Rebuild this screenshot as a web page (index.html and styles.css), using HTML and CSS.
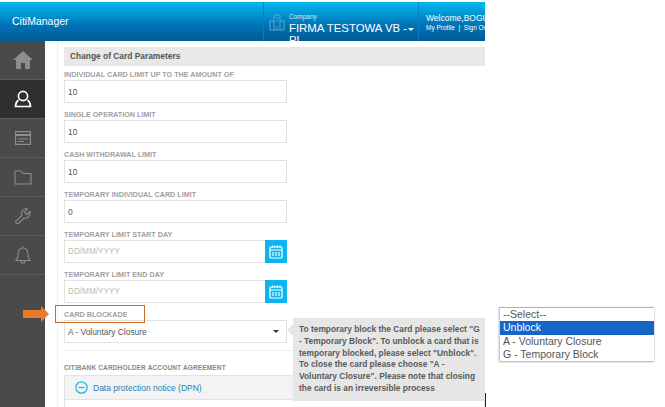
FILE: index.html
```html
<!DOCTYPE html>
<html lang="en">
<head>
    <meta charset="UTF-8">
    <title>CitiManager</title>
    <link rel="stylesheet" href="styles.css">
</head>
<body>
    <div class="app">
        <header class="topbar">
            <div class="brand">CitiManager</div>
            <div class="company">
                <svg class="company-icon" width="16" height="18" viewBox="0 0 16 18" fill="none" stroke="#5fa6cf" stroke-width="1">
                    <path d="M5 17V2h6v15M5 8H1v9h14V8h-4M8 17v-4M7 5h2M7 8h2"/>
                </svg>
                <div class="company-text">
                    <div class="company-label">Company</div>
                    <div class="company-name">FIRMA TESTOWA VB - PL</div>
                </div>
                <span class="caret-white"></span>
            </div>
            <div class="welcome">
                <div class="welcome-name">Welcome,BOGUSLAW</div>
                <div class="welcome-links">My Profile &nbsp;|&nbsp; Sign Out</div>
            </div>
        </header>
        <div class="content">
            <nav class="sidebar">
                <div class="nav-item">
                    <svg width="20" height="18" viewBox="0 0 20 18"><path fill="#8d8d8d" d="M10 0 0 9h3v9h5v-6h4v6h5V9h3z"/></svg>
                </div>
                <div class="nav-item active">
                    <svg width="18" height="18" viewBox="0 0 18 18" fill="none" stroke="#fff" stroke-width="1.6"><circle cx="9" cy="6" r="4.6"/><path d="M4.5 10C2.5 11.5 1.5 13.5 1.5 16.5h15C16.5 13.5 15.5 11.5 13.5 10"/></svg>
                </div>
                <div class="nav-item">
                    <svg width="16" height="14" viewBox="0 0 16 14" fill="none" stroke="#8d8d8d" stroke-width="1.2"><rect x="0.6" y="0.6" width="14.8" height="12.8"/><path d="M1 4h14" stroke-width="2"/><path d="M3 8h10M3 10.5h6"/></svg>
                </div>
                <div class="nav-item">
                    <svg width="18" height="15" viewBox="0 0 18 15" fill="none" stroke="#8d8d8d" stroke-width="1.1"><path d="M1 14V1h6l2 2.5h8V14z"/></svg>
                </div>
                <div class="nav-item">
                    <svg width="16" height="17" viewBox="0 0 16 17" fill="none" stroke="#8d8d8d" stroke-width="1.1"><path d="M15 3.5 12 6.5 9.5 4.5 12.5 1C9.5.2 6.5 2 6.5 5.5c0 1 .2 1.5.4 2L1 13c-1 1.5 1 3.5 2.5 2.5L9 10c3.5 1 6.5-2 6-6.5z"/></svg>
                </div>
                <div class="nav-item">
                    <svg width="16" height="18" viewBox="0 0 16 18" fill="none" stroke="#8d8d8d" stroke-width="1.1"><path d="M1 14.5c1.5-1.5 2-3 2-6C3 4 5 2 8 2s5 2 5 6.5c0 3 .5 4.5 2 6zM8 .5V2M6 15c0 3 4 3 4 0"/></svg>
                </div>
            </nav>
            <main class="main">
                <h2 class="section-title">Change of Card Parameters</h2>
                <div class="field">
                    <label class="field-label">INDIVIDUAL CARD LIMIT UP TO THE AMOUNT OF</label>
                    <div class="input">10</div>
                </div>
                <div class="field">
                    <label class="field-label">SINGLE OPERATION LIMIT</label>
                    <div class="input">10</div>
                </div>
                <div class="field">
                    <label class="field-label">CASH WITHDRAWAL LIMIT</label>
                    <div class="input">10</div>
                </div>
                <div class="field">
                    <label class="field-label">TEMPORARY INDIVIDUAL CARD LIMIT</label>
                    <div class="input">0</div>
                </div>
                <div class="field">
                    <label class="field-label">TEMPORARY LIMIT START DAY</label>
                    <div class="input date">
                        <span class="placeholder">DD/MM/YYYY</span>
                        <span class="date-btn">
                            <svg width="14" height="14" viewBox="0 0 14 14" fill="none" stroke="#fff" stroke-width="1.2"><rect x="1" y="2" width="12" height="11" rx="1"/><path d="M1 5h12M3.5 0.5v2M6 0.5v2M8.5 0.5v2M11 0.5v2M4 7v4M7 7v4M10 7v4"/></svg>
                        </span>
                    </div>
                </div>
                <div class="field">
                    <label class="field-label">TEMPORARY LIMIT END DAY</label>
                    <div class="input date">
                        <span class="placeholder">DD/MM/YYYY</span>
                        <span class="date-btn">
                            <svg width="14" height="14" viewBox="0 0 14 14" fill="none" stroke="#fff" stroke-width="1.2"><rect x="1" y="2" width="12" height="11" rx="1"/><path d="M1 5h12M3.5 0.5v2M6 0.5v2M8.5 0.5v2M11 0.5v2M4 7v4M7 7v4M10 7v4"/></svg>
                        </span>
                    </div>
                </div>
                <div class="field">
                    <label class="field-label">CARD BLOCKADE</label>
                    <div class="input select">A - Voluntary Closure<span class="caret-dark"></span></div>
                </div>
                <hr class="divider">
                <div class="agreement-label">CITIBANK CARDHOLDER ACCOUNT AGREEMENT</div>
                <div class="accordion">
                    <div class="accordion-head">
                        <svg width="13" height="13" viewBox="0 0 13 13" fill="none" stroke="#1ab4ea" stroke-width="1.2"><circle cx="6.5" cy="6.5" r="5.7"/><path d="M3.5 6.5h6"/></svg>
                        <span>Data protection notice (DPN)</span>
                    </div>
                </div>
            </main>
        </div>

        <div class="tooltip">To temporary block the Card please select "G - Temporary Block". To unblock a card that is temporary blocked, please select "Unblock". To close the card please choose "A - Voluntary Closure". Please note that closing the card is an irreversible process</div>
    </div>

    <!-- annotations pasted over the screenshot -->
    <div class="highlight"></div>
    <svg class="arrow" width="26" height="16" viewBox="0 0 26 16"><path fill="#e87b2c" d="M0 4h18V0l8 8-8 8v-4H0z"/></svg>
    <span class="edge-line"></span>
    <ul class="dropdown">
        <li>--Select--</li>
        <li class="selected">Unblock</li>
        <li>A - Voluntary Closure</li>
        <li>G - Temporary Block</li>
    </ul>
</body>
</html>
```

FILE: styles.css
```css
body {
    margin: 0;
    font-family: "Liberation Sans", Arial, sans-serif;
    background: white;
    color: #555;
    height: 407px;
    overflow: hidden;
}
.app {
    position: relative;
    width: 485px;
    height: 405px;
    margin-top: 2px;
    overflow: hidden;
}
.topbar {
    display: flex;
    height: 39px;
    background: linear-gradient(to bottom, #00b8f1, #0073b6 60%, #005a98);
    color: white;
}
.brand {
    width: 263px;
    padding-left: 12px;
    line-height: 39px;
    font-size: 10.5px;
    box-sizing: border-box;
    flex-shrink: 0;
}
.company {
    display: flex;
    width: 156px;
    padding-left: 5px;
    border-left: 1px solid #0a7fbe;
    border-right: 1px solid #0a7fbe;
    box-sizing: border-box;
    flex-shrink: 0;
    overflow: hidden;
}
.company-icon {
    margin: 11px 4px 0 0;
    flex-shrink: 0;
}
.company-text {
    width: 120px;
    flex-shrink: 0;
}
.company-label {
    font-size: 6.5px;
    margin-top: 11px;
    color: #cdeaf8;
}
.company-name {
    font-size: 11.4px;
    line-height: 12px;
    margin-top: 2px;
}
.caret-white {
    width: 0;
    height: 0;
    border: 3.5px solid transparent;
    border-top: 3.5px solid white;
    margin: 26px 0 0 -1px;
}
.welcome {
    padding: 11px 0 0 7px;
    white-space: nowrap;
}
.welcome-name {
    font-size: 8.5px;
}
.welcome-links {
    font-size: 6.5px;
    margin-top: 1px;
}
.content {
    display: flex;
    height: 366px;
}
.sidebar {
    width: 45px;
    background: #4a4a4a;
    flex-shrink: 0;
}
.nav-item {
    display: flex;
    align-items: center;
    justify-content: center;
    height: 38px;
    border-bottom: 1px solid #5c5c5c;
}
.nav-item.active {
    background: #2f2f2f;
}
.main {
    flex: 1;
    margin-left: 12px;
    padding: 6px 0 0 6px;
    border-left: 1px solid #eee;
    min-width: 0;
}
.section-title {
    margin: 0;
    height: 19px;
    line-height: 19px;
    padding-left: 6px;
    background: #e8e8e8;
    font-size: 8.4px;
    font-weight: bold;
    color: #555;
}
.field {
    width: 223px;
    margin-bottom: 3px;
}
.field-label {
    display: block;
    height: 14px;
    line-height: 17px;
    font-size: 7.2px;
    font-weight: bold;
    color: #a0a0a0;
    white-space: nowrap;
}
.input {
    display: flex;
    align-items: center;
    height: 23px;
    padding-left: 3px;
    border: 1px solid #e2e2e2;
    box-sizing: border-box;
    font-size: 8.4px;
    color: #555;
    background: white;
}
.date {
    justify-content: space-between;
    padding-right: 0;
}
.placeholder {
    color: #bbb;
    font-size: 8.2px;
}
.date-btn {
    display: flex;
    align-items: center;
    justify-content: center;
    width: 22px;
    height: 23px;
    margin-right: -1px;
    background: #0db5ee;
}
.select {
    justify-content: space-between;
    padding-right: 7px;
}
.caret-dark {
    width: 0;
    height: 0;
    border: 3px solid transparent;
    border-top: 3px solid #333;
    margin-top: 3px;
}
.divider {
    border: 0;
    border-top: 1px solid #eee;
    margin: 7px 0 13px;
}
.agreement-label {
    font-size: 6.5px;
    font-weight: bold;
    letter-spacing: 0.15px;
    color: #888;
    height: 11px;
    line-height: 8px;
}
.accordion {
    border: 1px solid #e2e2e2;
    height: 40px;
}
.accordion-head {
    display: flex;
    align-items: center;
    gap: 5px;
    height: 23px;
    padding-left: 10px;
    background: #f3f3f3;
    border-bottom: 1px solid #e2e2e2;
    font-size: 8.5px;
    color: #2b7fae;
}
.tooltip {
    position: absolute;
    left: 293px;
    top: 316px;
    width: 192px;
    height: 83px;
    padding: 6px 1px 0 6px;
    box-sizing: border-box;
    background: #e6e6e6;
    font-size: 8.4px;
    font-weight: bold;
    line-height: 11.8px;
    color: #5a5a5a;
}
.tooltip::before {
    content: "";
    position: absolute;
    left: -6px;
    top: 6px;
    border: 6px solid transparent;
    border-left: 0;
    border-right-color: #e6e6e6;
}
.highlight {
    position: absolute;
    left: 55px;
    top: 305px;
    width: 88px;
    height: 16px;
    border: 1px solid #d2691e;
}
.arrow {
    position: absolute;
    left: 23px;
    top: 306px;
}
.edge-line {
    position: absolute;
    left: 485px;
    top: 393px;
    width: 1px;
    height: 14px;
    background: #222;
}
.dropdown {
    position: absolute;
    left: 499px;
    top: 307px;
    width: 155px;
    margin: 0;
    padding: 0;
    list-style: none;
    font-size: 10.5px;
    line-height: 13.3px;
    color: #555;
    background: white;
    border-top: 1px solid #9fb6c6;
    border-left: 1px solid #ccc;
    box-shadow: 0 1px 2px #aaa;
    box-sizing: border-box;
}
.dropdown li {
    padding-left: 3px;
}
.dropdown .selected {
    background: #1565c8;
    color: white;
}
```
